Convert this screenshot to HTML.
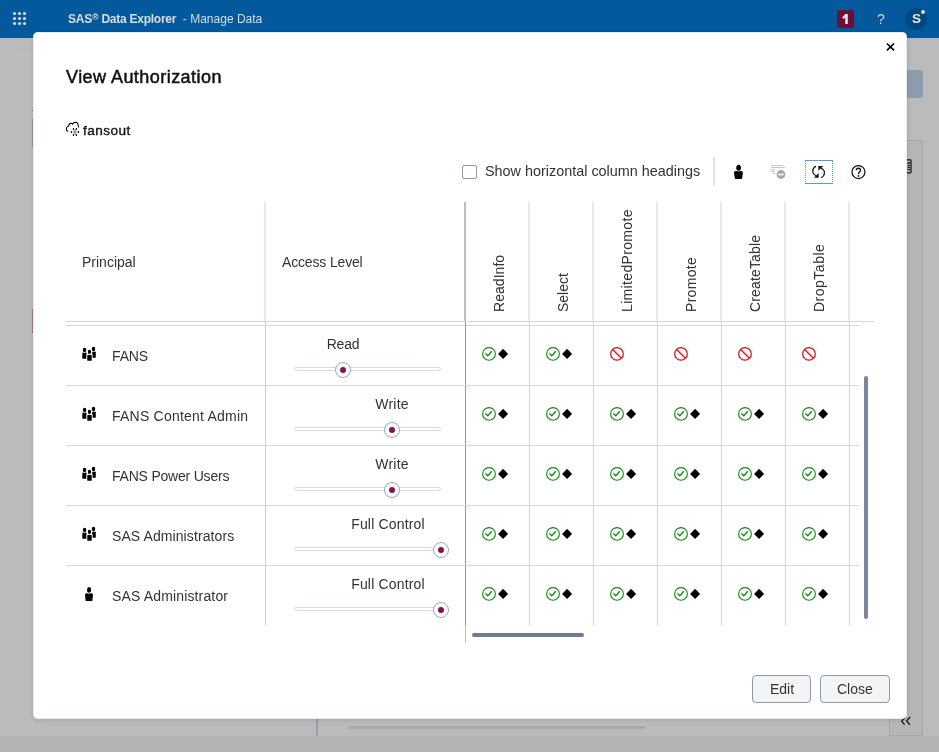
<!DOCTYPE html>
<html><head><meta charset="utf-8">
<style>
*{box-sizing:border-box;margin:0;padding:0}
html,body{width:939px;height:752px;overflow:hidden}
body{position:relative;background:#babbbd;font-family:"Liberation Sans",sans-serif;color:#333}
.a{position:absolute}
.t{position:absolute;white-space:nowrap;line-height:1;will-change:transform}
#hdr{left:0;top:0;width:939px;height:38px;background:#03599c}
#dlg{left:33px;top:32px;width:874px;height:687px;background:#fff;border-radius:5px;box-shadow:0 1px 5px rgba(0,0,0,.13),inset 0 0 0 1px rgba(205,210,218,.45)}
.hl{position:absolute;height:1px;background:#d3d7de}
.vl{position:absolute;width:1px;background:#cfd4db}
.hvl{position:absolute;width:2px;background:#e6e9ed}
.rot{transform-origin:0 0;transform:rotate(-90deg)}
.track{position:absolute;left:294px;width:147px;height:4px;border:1px solid #d6dbe2;border-radius:2px;background:#fff}
.thumb{position:absolute;width:16px;height:16px;border-radius:50%;border:1px solid #9ca7b7;background:#fff}
.thumb::after{content:"";position:absolute;left:3.7px;top:3.7px;width:6.6px;height:6.6px;border-radius:50%;background:#8a1150}
.lvl{transform:translateX(-50%)}
.btn{position:absolute;height:28px;border:1px solid #8e99ab;border-radius:4px;background:#f3f4f6}
</style></head>
<body>
<!-- background page -->
<div class="a" style="left:16px;top:54px;width:17px;height:698px;background:#bcbcbd"></div>
<div class="a" style="z-index:5;left:32px;top:119px;width:1px;height:28px;background:#8a93a0"></div><div class="a" style="z-index:5;left:32px;top:110px;width:1px;height:1px;background:#4a80b0"></div>
<div class="a" style="z-index:5;left:32px;top:309px;width:1px;height:24px;background:#9e6d8c"></div>
<div class="a" style="left:874px;top:70px;width:49px;height:28px;background:#8b9dac;border-radius:4px"></div>
<div class="a" style="left:889px;top:140px;width:34px;height:596px;z-index:0;border:1px solid #a4a6a9;background:#b6b6b7"></div>
<div class="a" style="left:316px;top:700px;width:2px;height:37px;background:#9fa1a4"></div>
<div class="a" style="left:0;top:736px;width:939px;height:16px;background:#b4b4b5"></div>
<div class="a" style="left:348px;top:726px;width:298px;height:3px;background:#a9aaab;border-radius:2px"></div>
<svg class="a" style="left:899px;top:714px" width="14" height="14"><path d="M6 3.5 L2.6 7.2 L5.6 10.6 M11.2 3 L7.6 7 L11 10.8" fill="none" stroke="#1a1a1a" stroke-width="1.3"/></svg>
<svg class="a" style="left:896px;top:156px" width="20" height="20"><rect x="4" y="3.9" width="11" height="12.9" rx="0.5" fill="none" stroke="#111" stroke-width="1.2"/><g fill="#111"><rect x="11.5" y="6.3" width="2.5" height="1.6"/><rect x="11.5" y="9" width="2.5" height="1.1"/><rect x="11.5" y="11.1" width="2.5" height="1.1"/><rect x="11.5" y="13.2" width="2.5" height="1.1"/></g></svg>

<!-- app header -->
<div id="hdr" class="a">
  <svg class="a" style="left:0;top:0" width="40" height="38">
    <g fill="#dcd8d4">
      <circle cx="14.5" cy="13.5" r="1.6"/><circle cx="19.5" cy="13.5" r="1.6"/><circle cx="24.5" cy="13.5" r="1.6"/>
      <circle cx="14.5" cy="18.5" r="1.6"/><circle cx="19.5" cy="18.5" r="1.6"/><circle cx="24.5" cy="18.5" r="1.6"/>
      <circle cx="14.5" cy="23.5" r="1.6"/><circle cx="19.5" cy="23.5" r="1.6"/><circle cx="24.5" cy="23.5" r="1.6"/>
    </g>
  </svg>
  <div class="t" style="left:68px;top:13px;font-size:12px;color:#d9dde3"><b style="letter-spacing:-0.25px">SAS<span style="font-size:9px;position:relative;top:-3px">®</span> Data Explorer</b>&nbsp; - Manage Data</div>
  <div class="a" style="left:837px;top:10px;width:17px;height:18px;background:#6b0f3a;border-radius:2px"></div>
  <svg class="a" style="left:834px;top:8px" width="24" height="22"><path d="M8.2 9.6 L11.3 6 H13.8 V16 H11.2 V9.4 L9.4 10.9 Z" fill="#e9e4de"/></svg>
  <div class="t" style="left:877px;top:12px;font-size:14px;color:#cfd6df">?</div>
  <div class="a" style="left:905px;top:8px;width:22px;height:22px;border-radius:50%;background:#02487f"></div>
  <div class="t" style="left:911.5px;top:11.5px;font-size:13.5px;font-weight:bold;color:#e6e2dc">S</div>
  <div class="a" style="left:920.5px;top:9.5px;width:4px;height:4px;border-radius:50%;background:#dcd8d4"></div>
</div>

<svg width="0" height="0" style="position:absolute">
 <defs>
  <symbol id="grp" viewBox="0 0 20 20">
   <ellipse cx="4.55" cy="4.9" rx="1.75" ry="2.2" fill="#000"/>
   <path d="M2.3 8.6 Q2.3 7.6 3.3 7.6 Q4.5 8 5.7 7.6 Q6.6 7.6 6.6 8.6 V13.4 Q6.6 13.8 6.2 13.8 H2.7 Q2.3 13.8 2.3 13.4 Z" fill="#000"/>
   <ellipse cx="13.5" cy="3.9" rx="1.75" ry="2.2" fill="#000"/>
   <path d="M12.2 7.6 Q12.2 6.6 13.2 6.6 Q14 7 14.8 6.6 Q15.8 6.6 15.8 7.6 V12.3 Q15.8 12.7 15.4 12.7 H12.6 Q12.2 12.7 12.2 12.3 Z" fill="#000"/>
   <ellipse cx="9.45" cy="6.9" rx="2.4" ry="2.9" fill="#fff"/>
   <ellipse cx="9.45" cy="6.9" rx="1.65" ry="2.15" fill="#000"/>
   <path d="M6.5 10.2 Q6.5 9 7.6 9 H11.3 Q12.5 9 12.5 10.2 V16.6 H6.5 Z" fill="#fff"/>
   <path d="M7.3 10.8 Q7.3 9.8 8.3 9.8 Q9.5 10.2 10.7 9.8 Q11.7 9.8 11.7 10.8 V15.4 Q11.7 15.8 11.3 15.8 H7.7 Q7.3 15.8 7.3 15.4 Z" fill="#000"/>
  </symbol>
  <symbol id="usr" viewBox="0 0 20 20">
   <path d="M9.1 2.1 Q11.2 2.3 11.2 5 Q11.1 7.8 9.1 7.8 Q7 7.8 7 5 Q7 2.3 9.1 2.1 Z" fill="#000"/>
   <path d="M5 10.1 Q5 8.4 6.6 8.3 H7.6 Q9.1 9.2 10.6 8.3 H11.4 Q13 8.4 13 10.1 L12.3 15.9 H5.7 Z" fill="#000"/>
  </symbol>
  <symbol id="ok" viewBox="0 0 30 16">
   <circle cx="8" cy="7.9" r="6.35" fill="none" stroke="#168a16" stroke-width="1.15"/>
   <path d="M4.4 7.5 L6.8 9.7 L10.8 5.3" fill="none" stroke="#168a16" stroke-width="1.35" stroke-linejoin="miter"/>
   <path d="M22.1 3.1 L26.9 7.9 L22.1 12.7 L17.3 7.9 Z" fill="#000" stroke="#000" stroke-width="0.4" stroke-linejoin="round"/>
  </symbol>
  <symbol id="no" viewBox="0 0 16 16">
   <circle cx="8" cy="7.9" r="6.3" fill="none" stroke="#d90f0f" stroke-width="1.25"/>
   <path d="M3.6 3.5 L12.4 12.3" stroke="#d90f0f" stroke-width="1.25"/>
  </symbol>
 </defs>
</svg>
<!-- dialog -->
<div id="dlg" class="a"></div>
<svg class="a" style="left:884px;top:41px" width="13" height="12"><path d="M2.9 2.5 L10.1 9.3 M10.1 2.5 L2.9 9.3" stroke="#000" stroke-width="1.65"/></svg>
<div class="t" style="left:66px;top:68px;font-size:18px;letter-spacing:0.45px;-webkit-text-stroke:0.5px #111;color:#111">View Authorization</div>
<svg class="a" style="left:63px;top:119px" width="20" height="20" viewBox="0 0 20 20">
 <path d="M5.3 12.4 Q3.3 12 3.3 10 Q3.4 7.6 5.6 7.1 Q6 4.4 8 4.3 Q9.2 4.3 9.6 5.1 Q10.5 3.3 12.5 3.3 Q14.7 3.4 15.1 5.8 Q15.2 7.3 15.8 8.5" fill="none" stroke="#000" stroke-width="1.05"/>
 <rect x="9.3" y="12.6" width="5.4" height="0.8" fill="#c4c4c4"/>
 <rect x="10.6" y="10.6" width="2.8" height="4.8" fill="#c8c8c8"/>
 <rect x="11.55" y="11.2" width="0.9" height="3.6" fill="#555"/>
 <g fill="#000"><ellipse cx="10.5" cy="10" rx="0.75" ry="0.95"/><ellipse cx="13.4" cy="10" rx="0.75" ry="0.95"/><ellipse cx="8.5" cy="13" rx="0.75" ry="0.95"/><ellipse cx="15.4" cy="13" rx="0.75" ry="0.95"/><ellipse cx="10.5" cy="16" rx="0.75" ry="0.95"/><ellipse cx="13.4" cy="16" rx="0.75" ry="0.95"/></g>
</svg>
<div class="t" style="left:83px;top:124px;font-size:13.6px;letter-spacing:0.45px;-webkit-text-stroke:0.35px #111;color:#111">fansout</div>
<div class="a" style="left:462px;top:165px;width:15px;height:14px;border:1.4px solid #8e9aae;border-radius:2px"></div>
<div class="t" style="left:485px;top:164px;font-size:14.4px;color:#333">Show horizontal column headings</div>
<div class="a" style="left:713px;top:157px;width:2px;height:29px;background:#e4e4e4"></div>
<svg class="a" style="left:730px;top:162px" width="16" height="20" viewBox="0 0 16 20">
 <path d="M8.6 2.8 Q11 3.1 11 6 Q10.9 8.8 8.6 8.8 Q6.2 8.8 6.2 6 Q6.2 3.1 8.6 2.8 Z" fill="#000"/>
 <path d="M4 11 Q4 9.2 5.8 9.1 H7 Q8.5 10 10 9.1 H11.1 Q12.9 9.2 12.9 11 L12 16.9 H5 Z" fill="#000"/>
</svg>
<svg class="a" style="left:768px;top:162px" width="20" height="20" viewBox="0 0 20 20">
 <g fill="#c6c6c6"><rect x="3" y="3" width="12" height="1"/><rect x="3" y="5" width="14" height="1"/><rect x="3" y="7" width="4" height="1"/><rect x="3" y="9" width="4" height="1"/><rect x="5" y="11" width="2" height="1"/></g>
 <circle cx="13" cy="12.5" r="4.4" fill="#a6a6a6"/>
 <rect x="10.2" y="11.8" width="5.6" height="1.5" fill="#fff"/>
</svg>
<div class="a" style="left:805px;top:160px;width:28px;height:24px;border-top:1px solid #5b9ad6;border-bottom:1px solid #5b9ad6;border-left:1px dotted #5b9ad6;border-right:1px dotted #5b9ad6"></div>
<svg class="a" style="left:809px;top:163px" width="20" height="18" viewBox="0 0 20 18">
 <path d="M7 3.1 C3.2 5 2 10.8 7.4 12.6" fill="none" stroke="#111" stroke-width="1.2"/>
 <path d="M12.2 14.7 C16 12.8 17.2 7 11.8 5.2" fill="none" stroke="#111" stroke-width="1.2"/>
 <path d="M5 14.7 L9.6 14.7 L9.6 10.1 Z" fill="#111"/>
 <path d="M14.2 3.1 L9.4 3.1 L9.4 7.7 Z" fill="#111"/>
</svg>
<svg class="a" style="left:849px;top:163px" width="18" height="18" viewBox="0 0 18 18">
 <circle cx="9.45" cy="9" r="6.5" fill="none" stroke="#111" stroke-width="1.25"/>
 <path d="M7.3 7.3 Q7.4 5.3 9.4 5.3 Q11.5 5.3 11.5 7.1 Q11.5 8.3 10.4 9 Q9.5 9.6 9.5 10.9" fill="none" stroke="#111" stroke-width="1.4"/>
 <circle cx="9.5" cy="12.9" r="0.95" fill="#111"/>
</svg>
<div class="hl" style="left:66px;top:321px;width:808px"></div>
<div class="hl" style="left:66px;top:325px;width:793px"></div>
<div class="hvl" style="left:264px;top:202px;height:119px"></div>
<div class="hvl" style="left:464px;top:202px;height:119px;background:#b6bdc8"></div>
<div class="hvl" style="left:528px;top:202px;height:119px"></div>
<div class="hvl" style="left:592px;top:202px;height:119px"></div>
<div class="hvl" style="left:656px;top:202px;height:119px"></div>
<div class="hvl" style="left:720px;top:202px;height:119px"></div>
<div class="hvl" style="left:784px;top:202px;height:119px"></div>
<div class="hvl" style="left:848px;top:202px;height:119px"></div>

<div class="t" style="left:82px;top:255px;font-size:14px">Principal</div>
<div class="t" style="left:282px;top:255px;font-size:14px;letter-spacing:-0.16px">Access Level</div>
<div class="t rot" style="left:492px;top:312px;font-size:14px;letter-spacing:0.04px">ReadInfo</div>
<div class="t rot" style="left:556px;top:312px;font-size:14px;letter-spacing:0px">Select</div>
<div class="t rot" style="left:620px;top:312px;font-size:14px;letter-spacing:0.34px">LimitedPromote</div>
<div class="t rot" style="left:684px;top:312px;font-size:14px;letter-spacing:0.3px">Promote</div>
<div class="t rot" style="left:748px;top:312px;font-size:14px;letter-spacing:0.15px">CreateTable</div>
<div class="t rot" style="left:812px;top:312px;font-size:14px;letter-spacing:0.5px">DropTable</div>
<div class="vl" style="left:265px;top:322px;height:303px;background:#c9ced5"></div>
<div class="vl" style="left:465px;top:322px;height:303px;background:#8f96a1"></div>
<div class="vl" style="left:465px;top:625px;height:18px;background:#bcc2ca"></div>
<div class="vl" style="left:529px;top:322px;height:303px"></div>
<div class="vl" style="left:593px;top:322px;height:303px"></div>
<div class="vl" style="left:657px;top:322px;height:303px"></div>
<div class="vl" style="left:721px;top:322px;height:303px"></div>
<div class="vl" style="left:785px;top:322px;height:303px"></div>
<div class="vl" style="left:849px;top:322px;height:303px"></div>
<div class="hl" style="left:66px;top:385px;width:793px"></div>
<div class="hl" style="left:66px;top:445px;width:793px"></div>
<div class="hl" style="left:66px;top:505px;width:793px"></div>
<div class="hl" style="left:66px;top:565px;width:793px"></div>
<svg class="a" style="left:80px;top:345px" width="20" height="20"><use href="#grp"/></svg>
<div class="t" style="left:112px;top:349px;font-size:14px;letter-spacing:-0.15px">FANS</div>
<div class="track" style="top:367px"></div>
<div class="thumb" style="left:335px;top:362px"></div>
<div class="t lvl" style="left:343px;top:337px;font-size:14px;letter-spacing:-0.2px">Read</div>
<svg class="a" style="left:481px;top:346px" width="30" height="16"><use href="#ok"/></svg>
<svg class="a" style="left:545px;top:346px" width="30" height="16"><use href="#ok"/></svg>
<svg class="a" style="left:609px;top:346px" width="16" height="16"><use href="#no"/></svg>
<svg class="a" style="left:673px;top:346px" width="16" height="16"><use href="#no"/></svg>
<svg class="a" style="left:737px;top:346px" width="16" height="16"><use href="#no"/></svg>
<svg class="a" style="left:801px;top:346px" width="16" height="16"><use href="#no"/></svg>
<svg class="a" style="left:80px;top:405px" width="20" height="20"><use href="#grp"/></svg>
<div class="t" style="left:112px;top:409px;font-size:14px;letter-spacing:0.22px">FANS Content Admin</div>
<div class="track" style="top:427px"></div>
<div class="thumb" style="left:384px;top:422px"></div>
<div class="t lvl" style="left:392px;top:397px;font-size:14px;letter-spacing:0.25px">Write</div>
<svg class="a" style="left:481px;top:406px" width="30" height="16"><use href="#ok"/></svg>
<svg class="a" style="left:545px;top:406px" width="30" height="16"><use href="#ok"/></svg>
<svg class="a" style="left:609px;top:406px" width="30" height="16"><use href="#ok"/></svg>
<svg class="a" style="left:673px;top:406px" width="30" height="16"><use href="#ok"/></svg>
<svg class="a" style="left:737px;top:406px" width="30" height="16"><use href="#ok"/></svg>
<svg class="a" style="left:801px;top:406px" width="30" height="16"><use href="#ok"/></svg>
<svg class="a" style="left:80px;top:465px" width="20" height="20"><use href="#grp"/></svg>
<div class="t" style="left:112px;top:469px;font-size:14px;letter-spacing:-0.21px">FANS Power Users</div>
<div class="track" style="top:487px"></div>
<div class="thumb" style="left:384px;top:482px"></div>
<div class="t lvl" style="left:392px;top:457px;font-size:14px;letter-spacing:0.25px">Write</div>
<svg class="a" style="left:481px;top:466px" width="30" height="16"><use href="#ok"/></svg>
<svg class="a" style="left:545px;top:466px" width="30" height="16"><use href="#ok"/></svg>
<svg class="a" style="left:609px;top:466px" width="30" height="16"><use href="#ok"/></svg>
<svg class="a" style="left:673px;top:466px" width="30" height="16"><use href="#ok"/></svg>
<svg class="a" style="left:737px;top:466px" width="30" height="16"><use href="#ok"/></svg>
<svg class="a" style="left:801px;top:466px" width="30" height="16"><use href="#ok"/></svg>
<svg class="a" style="left:80px;top:525px" width="20" height="20"><use href="#grp"/></svg>
<div class="t" style="left:112px;top:529px;font-size:14px;letter-spacing:0.09px">SAS Administrators</div>
<div class="track" style="top:547px"></div>
<div class="thumb" style="left:433px;top:542px"></div>
<div class="t lvl" style="left:388px;top:517px;font-size:14px;letter-spacing:0.17px">Full Control</div>
<svg class="a" style="left:481px;top:526px" width="30" height="16"><use href="#ok"/></svg>
<svg class="a" style="left:545px;top:526px" width="30" height="16"><use href="#ok"/></svg>
<svg class="a" style="left:609px;top:526px" width="30" height="16"><use href="#ok"/></svg>
<svg class="a" style="left:673px;top:526px" width="30" height="16"><use href="#ok"/></svg>
<svg class="a" style="left:737px;top:526px" width="30" height="16"><use href="#ok"/></svg>
<svg class="a" style="left:801px;top:526px" width="30" height="16"><use href="#ok"/></svg>
<svg class="a" style="left:80px;top:585px" width="20" height="20"><use href="#usr"/></svg>
<div class="t" style="left:112px;top:589px;font-size:14px;letter-spacing:0.15px">SAS Administrator</div>
<div class="track" style="top:607px"></div>
<div class="thumb" style="left:433px;top:602px"></div>
<div class="t lvl" style="left:388px;top:577px;font-size:14px;letter-spacing:0.17px">Full Control</div>
<svg class="a" style="left:481px;top:586px" width="30" height="16"><use href="#ok"/></svg>
<svg class="a" style="left:545px;top:586px" width="30" height="16"><use href="#ok"/></svg>
<svg class="a" style="left:609px;top:586px" width="30" height="16"><use href="#ok"/></svg>
<svg class="a" style="left:673px;top:586px" width="30" height="16"><use href="#ok"/></svg>
<svg class="a" style="left:737px;top:586px" width="30" height="16"><use href="#ok"/></svg>
<svg class="a" style="left:801px;top:586px" width="30" height="16"><use href="#ok"/></svg>
<div class="a" style="left:864.2px;top:376px;width:4px;height:243px;border-radius:2px;background:#798599"></div>
<div class="a" style="left:471.5px;top:633px;width:112px;height:4px;border-radius:2px;background:#707c90"></div>
<div class="btn" style="left:752px;top:675px;width:59px"></div>
<div class="t" style="left:770px;top:682px;font-size:14px;color:#333">Edit</div>
<div class="btn" style="left:820px;top:675px;width:70px"></div>
<div class="t" style="left:836.5px;top:682px;font-size:14px;color:#333">Close</div>

</body></html>
